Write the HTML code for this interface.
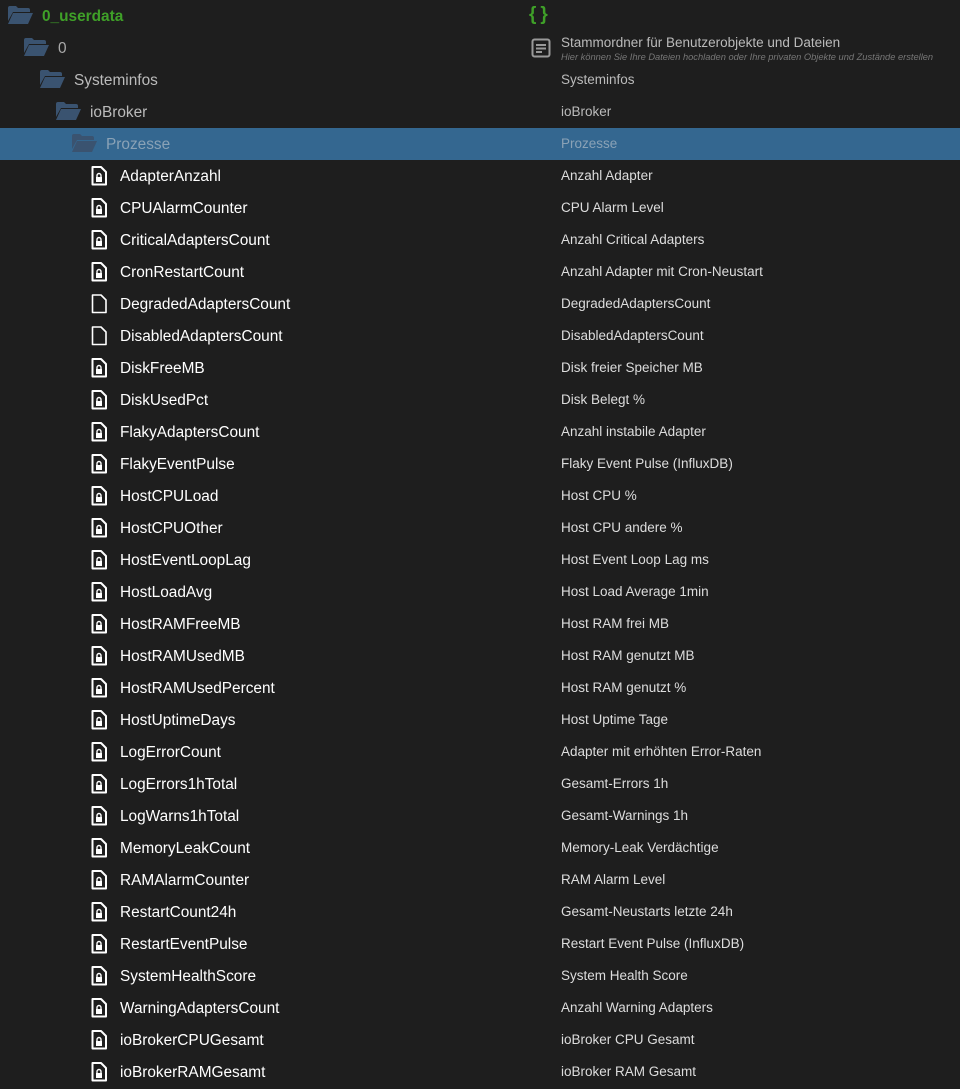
<!DOCTYPE html>
<html><head><meta charset="utf-8"><style>
body{margin:0;background:#1e1e1e;width:960px;height:1089px;overflow:hidden;font-family:"Liberation Sans",sans-serif;}
.r{position:relative;height:32px;}
.r.sel{background:#346790;}
.ic{position:absolute;top:7px;}
.n{position:absolute;top:1px;line-height:32px;font-size:15.4px;color:#fff;white-space:nowrap;}
.d{position:absolute;left:561px;top:0;line-height:32px;font-size:13.5px;color:#ddd;white-space:nowrap;}
.f .n{color:#bbb}
.f .d{color:#bbb}
</style></head><body>
<svg width="0" height="0" style="position:absolute"><defs>
<symbol id="fo" viewBox="0 0 25 18"><path d="M0 2Q0 0 2 0H8L10 2H20Q22 2 22 4V6H5L0 15Z" fill="#3a5370"/><path d="M5 7H25L20 18H0Z" fill="#3a5370"/></symbol>
<symbol id="fl" viewBox="0 0 16 20"><path d="M2 1H10L15 6V18.5H1.5V1Z" fill="none" stroke="#fff" stroke-width="2" stroke-linejoin="round"/><rect x="5" y="11" width="6" height="5" fill="#fff"/><path d="M6 11V9.5A2 2 0 0 1 10 9.5V11" fill="none" stroke="#fff" stroke-width="1.4"/></symbol>
<symbol id="fp" viewBox="0 0 16 20"><path d="M2 1H10L15 6V18.5H1.5V1Z" fill="none" stroke="#fff" stroke-width="1.6" stroke-linejoin="round"/></symbol>
</defs></svg>
<div class="r f"><svg class="ic" style="left:8px;top:6px" width="25" height="18"><use href="#fo"/></svg><span class="n" style="left:42px;color:#3fa028;font-weight:bold">0_userdata</span><span class="d" style="left:529px;color:#3fa028;font-weight:bold;font-size:19px;letter-spacing:4px;line-height:30px">{}</span></div>
<div class="r f"><svg class="ic" style="left:24px;top:6px" width="25" height="18"><use href="#fo"/></svg><span class="n" style="left:58px;color:#aaa">0</span>
<svg style="position:absolute;left:531px;top:6px" width="20" height="20"><rect x="1.5" y="1.5" width="17" height="17" rx="2" fill="none" stroke="#999" stroke-width="2"/><rect x="5" y="6" width="10" height="2" fill="#999"/><rect x="5" y="9.5" width="10" height="2" fill="#999"/><rect x="5" y="13" width="6" height="2" fill="#999"/></svg>
<span class="d" style="line-height:16px;top:3px;font-size:13.5px;color:#bbb">Stammordner für Benutzerobjekte und Dateien</span><span class="d" style="line-height:10px;top:20px;font-size:9.3px;font-style:italic;color:#777">Hier können Sie Ihre Dateien hochladen oder Ihre privaten Objekte und Zustände erstellen</span></div>
<div class="r f"><svg class="ic" style="left:40px;top:6px" width="25" height="18"><use href="#fo"/></svg><span class="n" style="left:74px">Systeminfos</span><span class="d">Systeminfos</span></div>
<div class="r f"><svg class="ic" style="left:56px;top:6px" width="25" height="18"><use href="#fo"/></svg><span class="n" style="left:90px">ioBroker</span><span class="d">ioBroker</span></div>
<div class="r sel f"><svg class="ic" style="left:72px;top:6px" width="25" height="18"><use href="#fo"/></svg><span class="n" style="left:106px;color:#8aa2b6">Prozesse</span><span class="d" style="color:#8aa2b6">Prozesse</span></div>
<div id="list"></div>
<script>
var L=[["AdapterAnzahl","Anzahl Adapter",1],["CPUAlarmCounter","CPU Alarm Level",1],["CriticalAdaptersCount","Anzahl Critical Adapters",1],["CronRestartCount","Anzahl Adapter mit Cron-Neustart",1],["DegradedAdaptersCount","DegradedAdaptersCount",0],["DisabledAdaptersCount","DisabledAdaptersCount",0],["DiskFreeMB","Disk freier Speicher MB",1],["DiskUsedPct","Disk Belegt %",1],["FlakyAdaptersCount","Anzahl instabile Adapter",1],["FlakyEventPulse","Flaky Event Pulse (InfluxDB)",1],["HostCPULoad","Host CPU %",1],["HostCPUOther","Host CPU andere %",1],["HostEventLoopLag","Host Event Loop Lag ms",1],["HostLoadAvg","Host Load Average 1min",1],["HostRAMFreeMB","Host RAM frei MB",1],["HostRAMUsedMB","Host RAM genutzt MB",1],["HostRAMUsedPercent","Host RAM genutzt %",1],["HostUptimeDays","Host Uptime Tage",1],["LogErrorCount","Adapter mit erhöhten Error-Raten",1],["LogErrors1hTotal","Gesamt-Errors 1h",1],["LogWarns1hTotal","Gesamt-Warnings 1h",1],["MemoryLeakCount","Memory-Leak Verdächtige",1],["RAMAlarmCounter","RAM Alarm Level",1],["RestartCount24h","Gesamt-Neustarts letzte 24h",1],["RestartEventPulse","Restart Event Pulse (InfluxDB)",1],["SystemHealthScore","System Health Score",1],["WarningAdaptersCount","Anzahl Warning Adapters",1],["ioBrokerCPUGesamt","ioBroker CPU Gesamt",1],["ioBrokerRAMGesamt","ioBroker RAM Gesamt",1]];
var h="";L.forEach(function(x){h+='<div class="r"><svg class="ic" style="left:91px;top:6px" width="16" height="20"><use href="#'+(x[2]?'fl':'fp')+'"/></svg><span class="n" style="left:120px">'+x[0]+'</span><span class="d">'+x[1]+'</span></div>';});
document.getElementById("list").innerHTML=h;
</script>
</body></html>
